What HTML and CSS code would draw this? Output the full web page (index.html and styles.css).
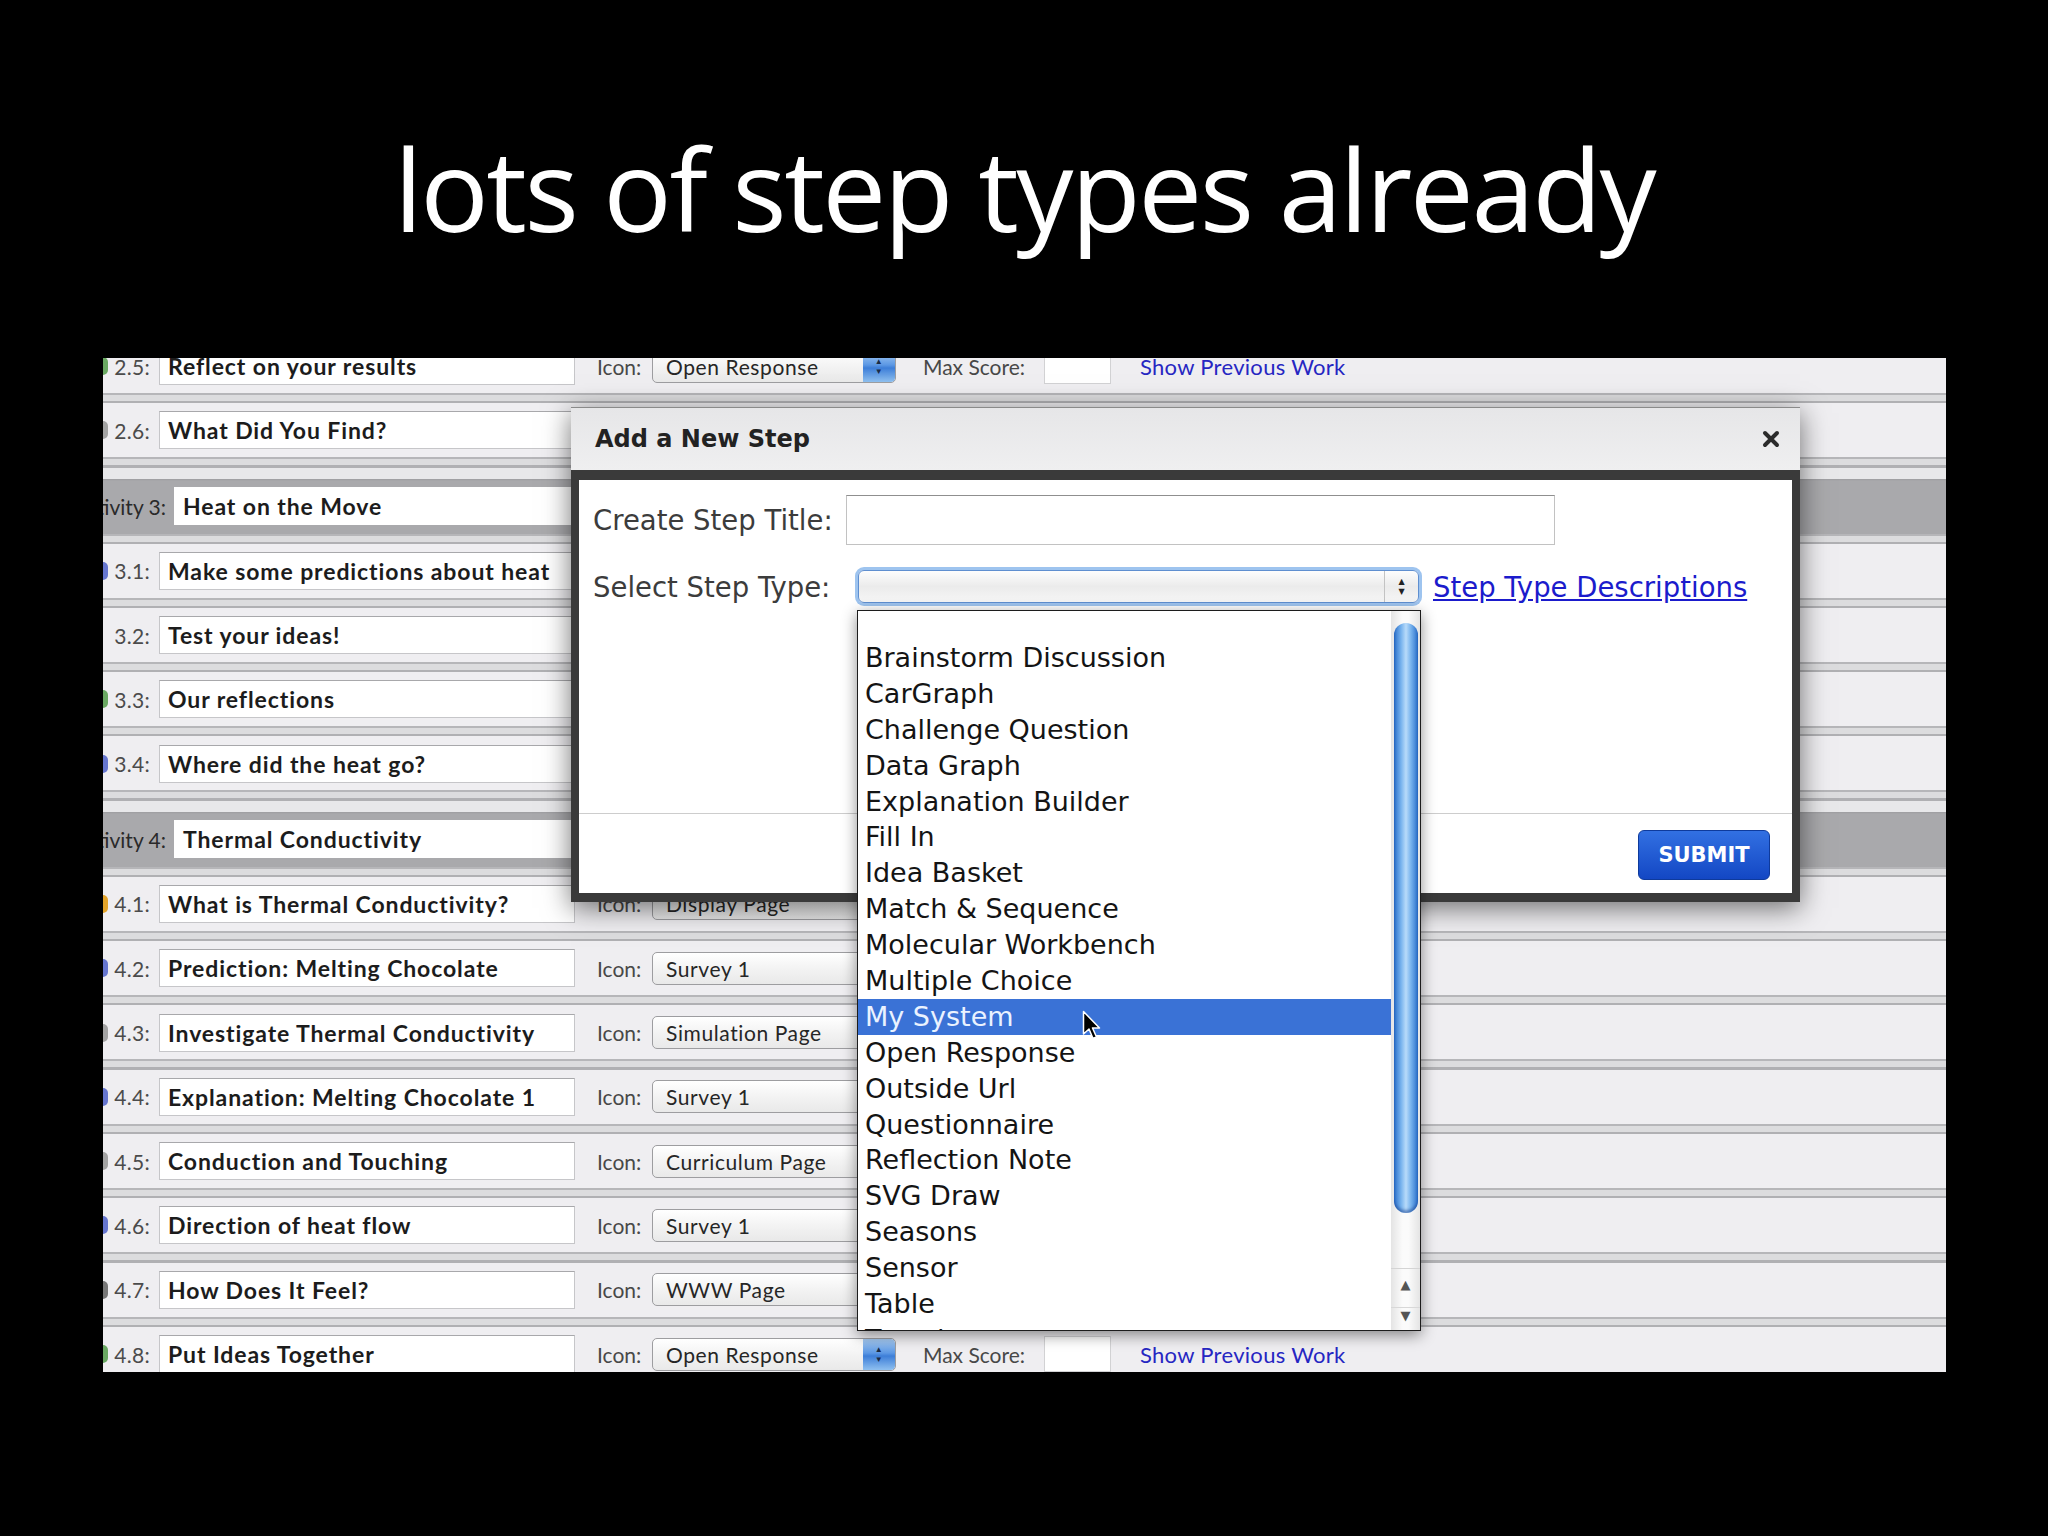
FILE: index.html
```html
<!DOCTYPE html>
<html>
<head>
<meta charset="utf-8">
<link rel="stylesheet" href="styles.css">
</head>
<body>
<div class="slide">
  <h1 class="title">lots of step types already</h1>
  <div class="shot">
    <div class="rows">
      <div class="row"><div class="num"><span class="ico green"></span><span>2.5:</span></div><div class="ttl">Reflect on your results</div><div class="ilbl">Icon:</div><div class="sel"><span>Open Response</span><span class="step"><i>▲</i><i>▼</i></span></div><div class="mlbl">Max Score:</div><div class="minp"></div><div class="link">Show Previous Work</div></div>
      <div class="row"><div class="num"><span class="ico gray"></span><span>2.6:</span></div><div class="ttl">What Did You Find?</div><div class="ilbl">Icon:</div><div class="sel"><span>Open Response</span><span class="step"><i>▲</i><i>▼</i></span></div></div>
      <div class="act"><div class="alabel">Activity 3:</div><div class="attl">Heat on the Move</div></div>
      <div class="row"><div class="num"><span class="ico blue"></span><span>3.1:</span></div><div class="ttl">Make some predictions about heat</div><div class="ilbl">Icon:</div><div class="sel"><span>Survey 1</span><span class="step"><i>▲</i><i>▼</i></span></div></div>
      <div class="row"><div class="num"><span class="ico none"></span><span>3.2:</span></div><div class="ttl">Test your ideas!</div><div class="ilbl">Icon:</div><div class="sel"><span>Simulation Page</span><span class="step"><i>▲</i><i>▼</i></span></div></div>
      <div class="row"><div class="num"><span class="ico green"></span><span>3.3:</span></div><div class="ttl">Our reflections</div><div class="ilbl">Icon:</div><div class="sel"><span>Open Response</span><span class="step"><i>▲</i><i>▼</i></span></div></div>
      <div class="row"><div class="num"><span class="ico blue"></span><span>3.4:</span></div><div class="ttl">Where did the heat go?</div><div class="ilbl">Icon:</div><div class="sel"><span>Survey 1</span><span class="step"><i>▲</i><i>▼</i></span></div></div>
      <div class="act"><div class="alabel">Activity 4:</div><div class="attl">Thermal Conductivity</div></div>
      <div class="row"><div class="num"><span class="ico orange"></span><span>4.1:</span></div><div class="ttl">What is Thermal Conductivity?</div><div class="ilbl">Icon:</div><div class="sel"><span>Display Page</span><span class="step"><i>▲</i><i>▼</i></span></div></div>
      <div class="row"><div class="num"><span class="ico blue"></span><span>4.2:</span></div><div class="ttl">Prediction: Melting Chocolate</div><div class="ilbl">Icon:</div><div class="sel"><span>Survey 1</span><span class="step"><i>▲</i><i>▼</i></span></div></div>
      <div class="row"><div class="num"><span class="ico gray"></span><span>4.3:</span></div><div class="ttl">Investigate Thermal Conductivity</div><div class="ilbl">Icon:</div><div class="sel"><span>Simulation Page</span><span class="step"><i>▲</i><i>▼</i></span></div></div>
      <div class="row"><div class="num"><span class="ico blue"></span><span>4.4:</span></div><div class="ttl">Explanation: Melting Chocolate 1</div><div class="ilbl">Icon:</div><div class="sel"><span>Survey 1</span><span class="step"><i>▲</i><i>▼</i></span></div></div>
      <div class="row"><div class="num"><span class="ico gray"></span><span>4.5:</span></div><div class="ttl">Conduction and Touching</div><div class="ilbl">Icon:</div><div class="sel"><span>Curriculum Page</span><span class="step"><i>▲</i><i>▼</i></span></div></div>
      <div class="row"><div class="num"><span class="ico blue"></span><span>4.6:</span></div><div class="ttl">Direction of heat flow</div><div class="ilbl">Icon:</div><div class="sel"><span>Survey 1</span><span class="step"><i>▲</i><i>▼</i></span></div></div>
      <div class="row"><div class="num"><span class="ico dark"></span><span>4.7:</span></div><div class="ttl">How Does It Feel?</div><div class="ilbl">Icon:</div><div class="sel"><span>WWW Page</span><span class="step"><i>▲</i><i>▼</i></span></div></div>
      <div class="row"><div class="num"><span class="ico green"></span><span>4.8:</span></div><div class="ttl">Put Ideas Together</div><div class="ilbl">Icon:</div><div class="sel"><span>Open Response</span><span class="step"><i>▲</i><i>▼</i></span></div><div class="mlbl">Max Score:</div><div class="minp"></div><div class="link">Show Previous Work</div></div>
    </div>

    <div class="modal">
      <div class="mhead">
        <div class="mtitle">Add a New Step</div>
        <svg class="mclose" width="18" height="18" viewBox="0 0 18 18"><path d="M3 3 L15 15 M15 3 L3 15" stroke="#2b2b2b" stroke-width="4" stroke-linecap="round"/></svg>
      </div>
      <div class="mbody">
        <div class="mform">
          <div class="frow frow1"><div class="flabel">Create Step Title:</div><div class="tinput"></div></div>
          <div class="frow frow2"><div class="flabel">Select Step Type:</div><div class="ssel"><span class="sarr"><i>▲</i><i>▼</i></span></div><a class="stlink">Step Type Descriptions</a></div>
        </div>
        <div class="mfoot"><div class="submit">SUBMIT</div></div>
      </div>
    </div>

    <div class="dd">
      <div class="opts">
        <div class="opt blank"></div>
        <div class="opt">Brainstorm Discussion</div>
        <div class="opt">CarGraph</div>
        <div class="opt">Challenge Question</div>
        <div class="opt">Data Graph</div>
        <div class="opt">Explanation Builder</div>
        <div class="opt">Fill In</div>
        <div class="opt">Idea Basket</div>
        <div class="opt">Match &amp; Sequence</div>
        <div class="opt">Molecular Workbench</div>
        <div class="opt">Multiple Choice</div>
        <div class="opt on">My System</div>
        <div class="opt">Open Response</div>
        <div class="opt">Outside Url</div>
        <div class="opt">Questionnaire</div>
        <div class="opt">Reflection Note</div>
        <div class="opt">SVG Draw</div>
        <div class="opt">Seasons</div>
        <div class="opt">Sensor</div>
        <div class="opt">Table</div>
        <div class="opt">Template</div>
      </div>
      <div class="sb">
        <div class="thumb"></div>
        <div class="track"></div>
        <div class="sarrows"><span>▲</span><span>▼</span></div>
      </div>
    </div>

    <svg class="cursor" width="20" height="32" viewBox="0 0 20 32"><path d="M1.5 1.5 L1.5 24 L7 19 L11 28.5 L14.5 27 L10.5 18 L17.5 18 Z" fill="#000" stroke="#fff" stroke-width="1.5" stroke-linejoin="round"/></svg>
  </div>
</div>
</body>
</html>
```

FILE: styles.css
```css
* { box-sizing: border-box; }
body { margin: 0; background: #000; width: 2048px; height: 1536px; overflow: hidden; }
.slide { width: 2048px; height: 1536px; }

.title {
  margin: 0;
  height: 358px;
  padding-top: 131px;
  font-family: "Open Sans", sans-serif;
  font-weight: 400;
  font-size: 114px;
  line-height: 1;
  letter-spacing: -2.5px;
  color: #fff;
  text-align: center;
}

.shot {
  position: relative;
  margin-left: 103px;
  width: 1843px;
  height: 1014px;
  overflow: hidden;
  background: #eeedf0;
  font-family: Lato, "Open Sans", sans-serif;
}
.rows { margin-top: -19px; }

.row {
  display: flex;
  align-items: center;
  height: 64.3px;
  padding-bottom: 10px;
  background: linear-gradient(to bottom, #efeef1 0, #efeef1 54.3px, #b6b6b9 54.3px, #b6b6b9 56.3px, #dcdcde 56.3px, #dcdcde 62.3px, #b0b0b3 62.3px);
}
.act {
  display: flex;
  align-items: center;
  height: 76px;
  padding-top: 11px;
  padding-bottom: 10px;
  background: linear-gradient(to bottom, #e8e8ea 0, #e8e8ea 11px, #9d9da0 11px, #a9a9ac 13px, #a9a9ac 66px, #b6b6b9 66px, #b6b6b9 68px, #dcdcde 68px, #dcdcde 74px, #b0b0b3 74px);
}

.num {
  width: 47px;
  display: flex;
  justify-content: space-between;
  align-items: center;
  font-size: 21px;
  letter-spacing: 0.3px;
  color: #4b4b4b;
}
.ico { width: 5px; height: 18px; border-radius: 0 5px 5px 0; }
.ico.green { background: #6aa862; }
.ico.blue { background: #6676cf; }
.ico.gray { background: #a3a3a3; }
.ico.orange { background: #e3a42a; }
.ico.dark { background: #777; }
.ico.none { background: transparent; }

.ttl {
  margin-left: 9px;
  width: 416px;
  height: 38px;
  background: #fff;
  border: 1px solid #c6c6c9;
  border-top-color: #a8a8ab;
  padding-left: 8px;
  font-weight: 700;
  font-size: 23px;
  letter-spacing: 0.9px;
  line-height: 36px;
  color: #1c1c1c;
  white-space: nowrap;
  overflow: hidden;
}
.alabel {
  width: 63px;
  display: flex;
  justify-content: flex-end;
  white-space: nowrap;
  font-size: 21px;
  color: #2a2a2a;
}
.attl {
  margin-left: 8px;
  width: 401px;
  height: 38px;
  background: #fff;
  padding-left: 9px;
  font-weight: 700;
  font-size: 23px;
  letter-spacing: 0.9px;
  line-height: 38px;
  color: #1c1c1c;
  white-space: nowrap;
}
.ilbl { margin-left: 22px; width: 47px; font-size: 21px; color: #484848; }
.sel {
  margin-left: 8px;
  width: 244px;
  height: 33px;
  display: flex;
  align-items: center;
  background: linear-gradient(#ffffff, #f3f3f3 50%, #e9e9e9);
  border: 1px solid #9d9da0;
  border-radius: 5px;
  padding-left: 13px;
  font-size: 21px;
  letter-spacing: 0.6px;
  color: #262626;
  white-space: nowrap;
  overflow: hidden;
}
.step {
  margin-left: auto;
  width: 32px;
  height: 100%;
  border-radius: 0 4px 4px 0;
  background: linear-gradient(to bottom, #a9cdf4, #5c98e4 45%, #3d7ed8 55%, #8fc0f0);
  display: flex;
  flex-direction: column;
  align-items: center;
  justify-content: center;
  color: #1a2a44;
}
.step i, .sarr i { font-style: normal; font-size: 8px; line-height: 10px; }
.mlbl { margin-left: 27px; width: 109px; font-size: 21px; color: #484848; white-space: nowrap; }
.minp { margin-left: 12px; width: 67px; height: 36px; background: #fff; border: 1px solid #d2d2d4; }
.link { margin-left: 29px; font-size: 22px; letter-spacing: 0.3px; color: #2626c2; white-space: nowrap; }

/* modal */
.modal {
  position: absolute;
  left: 468px;
  top: 49px;
  width: 1229px;
  height: 495px;
  background: #3a3a3a;
  box-shadow: 0 6px 26px rgba(0, 0, 0, 0.55);
  display: flex;
  flex-direction: column;
  font-family: "DejaVu Sans", sans-serif;
}
.mhead {
  height: 63px;
  background: linear-gradient(#e6e6e8, #efeff0);
  border-top: 1px solid #8a8a8a;
  display: flex;
  align-items: center;
  justify-content: space-between;
  padding: 0 20px 0 24px;
}
.mtitle { font-weight: 700; font-size: 24px; color: #222; }
.mbody {
  flex: 1;
  margin: 10px 8px 9px;
  background: #fff;
  display: flex;
  flex-direction: column;
}
.mform { flex: 1; padding: 15px 14px 0; }
.frow { display: flex; align-items: center; }
.frow1 { height: 50px; }
.frow2 { height: 39px; margin-top: 22px; }
.flabel { width: 240px; font-size: 27.5px; color: #3c3c3c; white-space: nowrap; }
.tinput {
  margin-left: 13px;
  width: 709px;
  height: 50px;
  background: #fff;
  border: 1px solid #c2c2c2;
  border-top-color: #8f8f8f;
}
.ssel {
  margin-left: 25px;
  width: 561px;
  height: 33px;
  border: 1px solid #5f8fd0;
  border-radius: 6px;
  box-shadow: 0 0 0 3px #9ec4ef;
  background: linear-gradient(#fdfdfd, #ebebeb 50%, #f6f6f6);
  display: flex;
  justify-content: flex-end;
}
.sarr {
  width: 34px;
  border-left: 1px solid #c3c3c3;
  display: flex;
  flex-direction: column;
  align-items: center;
  justify-content: center;
  color: #222;
}
.stlink { margin-left: 14px; font-size: 27.5px; color: #1b1bcc; text-decoration: underline; white-space: nowrap; }
.mfoot {
  height: 80px;
  border-top: 1px solid #cdcdcd;
  display: flex;
  justify-content: flex-end;
  padding: 16px 22px 0 0;
}
.submit {
  width: 132px;
  height: 50px;
  border-radius: 6px;
  background: linear-gradient(#3270e2, #1347c4);
  border: 1px solid #0e3a9c;
  color: #fff;
  font-weight: 700;
  font-size: 21px;
  display: flex;
  align-items: center;
  justify-content: center;
}

/* dropdown */
.dd {
  position: absolute;
  left: 754px;
  top: 252px;
  width: 564px;
  height: 721px;
  background: #fff;
  border: 1px solid #1c1c1c;
  box-shadow: 0 4px 14px rgba(0, 0, 0, 0.45);
  display: flex;
  overflow: hidden;
  font-family: "DejaVu Sans", sans-serif;
}
.opts { flex: 1; overflow: hidden; }
.opt {
  height: 35.9px;
  line-height: 35.9px;
  padding-left: 7px;
  font-size: 27px;
  color: #141414;
  white-space: nowrap;
}
.opt.blank { height: 29px; }
.opt.on { background: #3a72d6; color: #eaf2ff; }
.sb {
  width: 29px;
  display: flex;
  flex-direction: column;
  background: linear-gradient(to right, #e4e4e4, #fbfbfb 40%, #fbfbfb 60%, #e4e4e4);
}
.thumb {
  margin: 12px 2px 0 3px;
  height: 590px;
  border-radius: 12px;
  background: linear-gradient(to right, #2a70cc, #79b4ee 30%, #b8dbfa 50%, #79b4ee 70%, #2a70cc);
  box-shadow: inset 0 -3px 3px rgba(20, 60, 140, 0.5);
}
.track { flex: 1; }
.sarrows {
  height: 62px;
  display: flex;
  flex-direction: column;
  align-items: center;
  justify-content: space-around;
  font-size: 13px;
  color: #555;
  border-top: 1px solid #d4d4d4;
}
.sarrows span + span { border-top: 1px solid #d8d8d8; width: 100%; text-align: center; }

.cursor { position: absolute; left: 979px; top: 652px; }
```
